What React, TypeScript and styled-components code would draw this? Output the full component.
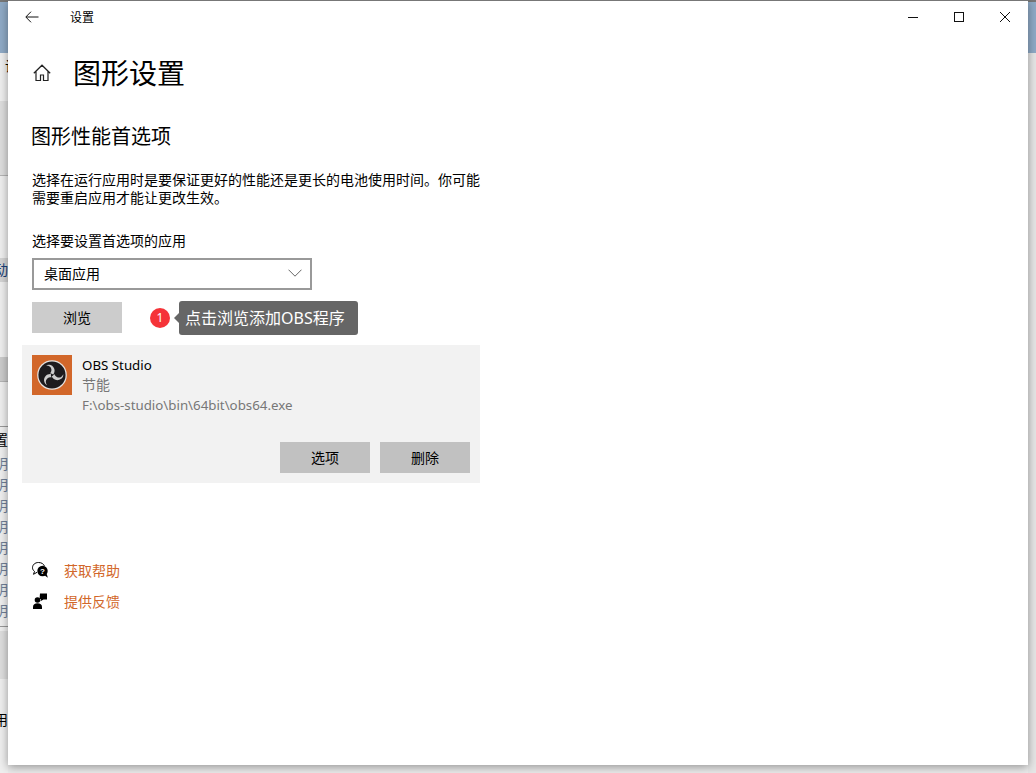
import React from "react";
import styled, { createGlobalStyle } from "styled-components";

const GlobalStyle = createGlobalStyle`
  html, body {
    margin: 0;
    padding: 0;
    background: #ececec;
  }
  * {
    box-sizing: border-box;
  }
`;

const FONT = `"Noto Sans", "Noto Sans CJK SC", sans-serif`;
const ACCENT = "#d2672a";

const Desktop = styled.div`
  position: relative;
  width: 1036px;
  height: 773px;
  overflow: hidden;
  background: #ececec;
  font-family: ${FONT};
  color: #000;
`;

/* the app behind the settings window, only its edges are visible */
const BehindLeft = styled.div`
  position: absolute;
  left: 0;
  top: 0;
  width: 8px;
  height: 773px;
  display: flex;
  flex-direction: column;
  overflow: hidden;
  background: #efefef;
`;

const BehindRight = styled.div`
  position: absolute;
  right: 0;
  top: 0;
  width: 8px;
  height: 773px;
  background: #e6e6e6;
`;

const BehindBlock = styled.div<{ $h: number; $bg?: string; $line?: boolean }>`
  flex: none;
  height: ${(p) => p.$h}px;
  background: ${(p) => p.$bg || "transparent"};
  border-bottom: ${(p) => (p.$line ? "1px solid #b4b4b4" : "none")};
`;

const BehindText = styled.div<{ $h: number; $color?: string; $bg?: string; $start?: boolean }>`
  flex: none;
  width: 8px;
  height: ${(p) => p.$h}px;
  line-height: ${(p) => p.$h}px;
  font-size: 14px;
  white-space: nowrap;
  display: flex;
  justify-content: ${(p) => (p.$start ? "flex-start" : "flex-end")};
  padding-left: ${(p) => (p.$start ? "5px" : "0")};
  overflow: hidden;
  color: ${(p) => p.$color || "#000"};
  background: ${(p) => p.$bg || "transparent"};
`;

const Window = styled.div`
  position: absolute;
  left: 8px;
  top: 0;
  width: 1020px;
  height: 765px;
  display: flex;
  flex-direction: column;
  background: #fff;
  border-top: 1px solid #777;
  box-shadow: 0 2px 9px rgba(0, 0, 0, 0.38);
`;

const TitleBar = styled.div`
  height: 32px;
  display: flex;
  align-items: center;
`;

const BackButton = styled.div`
  width: 47px;
  height: 32px;
  display: flex;
  align-items: center;
  justify-content: center;
`;

const WindowTitle = styled.div`
  margin-left: 15px;
  padding-top: 2px;
  font-size: 12px;
  line-height: 32px;
`;

const Controls = styled.div`
  margin-left: auto;
  display: flex;
`;

const ControlButton = styled.div`
  width: 46px;
  height: 32px;
  display: flex;
  align-items: center;
  justify-content: center;
`;

const PageHeader = styled.div`
  margin-top: 20px;
  padding-left: 25px;
  height: 40px;
  display: flex;
  align-items: center;
`;

const PageTitle = styled.h1`
  margin: 0 0 0 22px;
  font-size: 28px;
  font-weight: 400;
  line-height: 40px;
`;

const Content = styled.div`
  padding-left: 24px;
  width: 472px;
  display: flex;
  flex-direction: column;
`;

const SectionTitle = styled.h2`
  margin: 30px 0 0 -1px;
  font-size: 20px;
  font-weight: 400;
  line-height: 28px;
`;

const Description = styled.p`
  margin: 20px 0 0;
  font-size: 14px;
  line-height: 18px;
  width: 448px;
`;

const FieldLabel = styled.div`
  margin-top: 24px;
  font-size: 14px;
  line-height: 20px;
`;

const Select = styled.div`
  margin-top: 7px;
  width: 280px;
  height: 32px;
  padding: 0 8px 2px 10px;
  border: 2px solid #999;
  display: flex;
  align-items: center;
  justify-content: space-between;
  font-size: 14px;
`;

const BrowseRow = styled.div`
  margin-top: 12px;
  height: 31px;
  display: flex;
  align-items: center;
`;

const Button = styled.div<{ $bg: string }>`
  width: 90px;
  height: 31px;
  padding-bottom: 2px;
  display: flex;
  align-items: center;
  justify-content: center;
  font-size: 14px;
  background: ${(p) => p.$bg};
`;

const StepBadge = styled.div`
  margin-left: 28px;
  width: 20px;
  height: 20px;
  border-radius: 50%;
  background: #f53338;
  color: #fff;
  font-size: 12px;
  display: flex;
  align-items: center;
  justify-content: center;
`;

const Tip = styled.div`
  position: relative;
  margin-left: 9px;
  width: 179px;
  height: 34px;
  padding-left: 6px;
  border-radius: 3px;
  background: #666;
  color: #fff;
  font-size: 16px;
  line-height: 34px;
  white-space: nowrap;

  &::before {
    content: "";
    position: absolute;
    left: -5px;
    top: 12px;
    border-top: 5px solid transparent;
    border-bottom: 5px solid transparent;
    border-right: 5px solid #666;
  }
`;

const AppCard = styled.div`
  margin: 12px 0 0 -10px;
  width: 458px;
  height: 138px;
  padding: 10px;
  background: #f2f2f2;
  display: flex;
  flex-direction: column;
`;

const AppRow = styled.div`
  display: flex;
  gap: 10px;
`;

const AppIcon = styled.div`
  width: 40px;
  height: 40px;
  background: ${ACCENT};
  display: flex;
  align-items: center;
  justify-content: center;
`;

const AppInfo = styled.div`
  display: flex;
  flex-direction: column;
`;

const AppLine = styled.div<{ $muted?: boolean; $cjk?: boolean }>`
  font-size: ${(p) => (p.$cjk ? "14px" : "13.3px")};
  line-height: 20px;
  color: ${(p) => (p.$muted ? "#777" : "#000")};
`;

const CardActions = styled.div`
  margin-top: auto;
  display: flex;
  justify-content: flex-end;
  gap: 10px;
`;

const Links = styled.div`
  margin-top: 77px;
  display: flex;
  flex-direction: column;
  gap: 11px;
`;

const LinkRow = styled.div`
  height: 20px;
  display: flex;
  align-items: center;
  gap: 16px;
`;

const LinkText = styled.span`
  font-size: 14px;
  color: ${ACCENT};
`;

const ObsBlade = "M18.500 16.500C21 13.500 20.500 8 15.500 5.800 13.500 5 11.300 5.300 9.800 6.400 12.800 6 15.800 7.500 16.300 10.500 16.600 12.500 15.800 14 14.800 15.200 16 15.200 17.500 15.600 18.500 16.500Z";

const ObsLogo = () => (
  <svg width="30" height="30" viewBox="0 0 34 34">
    <circle cx="17" cy="17" r="16.800" fill="#e6e3e1" />
    <circle cx="17" cy="17" r="15.400" fill="#1d1b1e" />
    <g fill="#cdcdcd">
      <path d={ObsBlade} />
      <path d={ObsBlade} transform="rotate(120 17 17)" />
      <path d={ObsBlade} transform="rotate(240 17 17)" />
    </g>
  </svg>
);

const HelpIcon = () => (
  <svg width="16" height="16" viewBox="0 0 16 16">
    <path
      d="M6.500 0.500C3 0.500 0.500 2.800 0.500 5.700c0 1.500 0.800 2.800 2 3.700L1.500 12.300l3.500-2"
      fill="none"
      stroke="#000"
      strokeWidth="1"
    />
    <path d="M6.500 0.500c3 0 5.400 1.500 6 3.800" fill="none" stroke="#000" strokeWidth="1" />
    <circle cx="10.500" cy="9" r="5.200" fill="#000" />
    <path d="M12.500 13.300l3.300 2.500-1-3.900z" fill="#000" />
    <text x="10.500" y="12" fontSize="8" fontWeight="700" fontFamily="Liberation Sans, sans-serif" fill="#fff" textAnchor="middle">
      ?
    </text>
  </svg>
);

const FeedbackIcon = () => (
  <svg width="16" height="16" viewBox="0 0 16 16">
    <circle cx="5.500" cy="7" r="2.800" fill="#000" />
    <path d="M1 16v-2c0-2.400 1.800-3.700 4.500-3.700s4.500 1.300 4.500 3.700v2z" fill="#000" />
    <path d="M8 0.500h7v6h-3.500L8.500 8.200 9 6H7.500z" fill="#000" />
  </svg>
);

export default function App() {
  return (
    <>
      <GlobalStyle />
      <Desktop>
        <BehindLeft>
          <BehindBlock $h={2} $bg="#777" />
          <BehindBlock $h={51} $bg="#8faac6" />
          <BehindText $h={26} $start>
            设
          </BehindText>
          <BehindBlock $h={22} />
          <BehindBlock $h={75} $bg="#dedede" $line />
          <BehindBlock $h={82} />
          <BehindText $h={24} $color="#1b3f78" $bg="#d4d4d4">
            动
          </BehindText>
          <BehindBlock $h={75} />
          <BehindBlock $h={25} $bg="#cbcbcb" $line />
          <BehindBlock $h={44} />
          <BehindBlock $h={1} $bg="#999" />
          <BehindText $h={26}>置</BehindText>
          {Array.from({ length: 8 }).map((_, i) => (
            <BehindText key={i} $h={21} $color="#6f7f96">
              明
            </BehindText>
          ))}
          <BehindBlock $h={5} />
          <BehindBlock $h={1} $bg="#999" />
          <BehindBlock $h={4} />
          <BehindBlock $h={48} $bg="#dedede" />
          <BehindBlock $h={29} />
          <BehindText $h={24}>用</BehindText>
        </BehindLeft>
        <BehindRight>
          <BehindBlock $h={2} $bg="#777" />
          <BehindBlock $h={51} $bg="#8faac6" />
        </BehindRight>
        <Window>
          <TitleBar>
            <BackButton>
              <svg width="14" height="12" viewBox="0 0 14 12">
                <path d="M13.500 6H1M6 0.700L0.800 6 6 11.300" fill="none" stroke="#111" strokeWidth="1" />
              </svg>
            </BackButton>
            <WindowTitle>设置</WindowTitle>
            <Controls>
              <ControlButton>
                <svg width="10" height="10" viewBox="0 0 10 10">
                  <path d="M0 5.500h10" stroke="#111" strokeWidth="1" />
                </svg>
              </ControlButton>
              <ControlButton>
                <svg width="10" height="10" viewBox="0 0 10 10">
                  <rect x="0.500" y="0.500" width="9" height="9" fill="none" stroke="#111" strokeWidth="1" />
                </svg>
              </ControlButton>
              <ControlButton>
                <svg width="10" height="10" viewBox="0 0 10 10">
                  <path d="M0 0l10 10M10 0L0 10" stroke="#111" strokeWidth="1" />
                </svg>
              </ControlButton>
            </Controls>
          </TitleBar>
          <PageHeader>
            <svg width="18" height="18" viewBox="0 0 18 18">
              <path
                d="M0.800 9.200L9 1.200l8.200 8M3 7.500v9h4.500v-5.500h3v5.500H15v-9"
                fill="none"
                stroke="#222"
                strokeWidth="1.200"
              />
            </svg>
            <PageTitle>图形设置</PageTitle>
          </PageHeader>
          <Content>
            <SectionTitle>图形性能首选项</SectionTitle>
            <Description>
              选择在运行应用时是要保证更好的性能还是更长的电池使用时间。你可能需要重启应用才能让更改生效。
            </Description>
            <FieldLabel>选择要设置首选项的应用</FieldLabel>
            <Select>
              桌面应用
              <svg width="14" height="8" viewBox="0 0 14 8">
                <path d="M0.500 0.700L7 7.200l6.500-6.500" fill="none" stroke="#666" strokeWidth="1" />
              </svg>
            </Select>
            <BrowseRow>
              <Button $bg="#cccccc">浏览</Button>
              <StepBadge>1</StepBadge>
              <Tip>点击浏览添加OBS程序</Tip>
            </BrowseRow>
            <AppCard>
              <AppRow>
                <AppIcon>
                  <ObsLogo />
                </AppIcon>
                <AppInfo>
                  <AppLine>OBS Studio</AppLine>
                  <AppLine $muted $cjk>
                    节能
                  </AppLine>
                  <AppLine $muted>F:\obs-studio\bin\64bit\obs64.exe</AppLine>
                </AppInfo>
              </AppRow>
              <CardActions>
                <Button $bg="#c1c1c1">选项</Button>
                <Button $bg="#c1c1c1">删除</Button>
              </CardActions>
            </AppCard>
            <Links>
              <LinkRow>
                <HelpIcon />
                <LinkText>获取帮助</LinkText>
              </LinkRow>
              <LinkRow>
                <FeedbackIcon />
                <LinkText>提供反馈</LinkText>
              </LinkRow>
            </Links>
          </Content>
        </Window>
      </Desktop>
    </>
  );
}
